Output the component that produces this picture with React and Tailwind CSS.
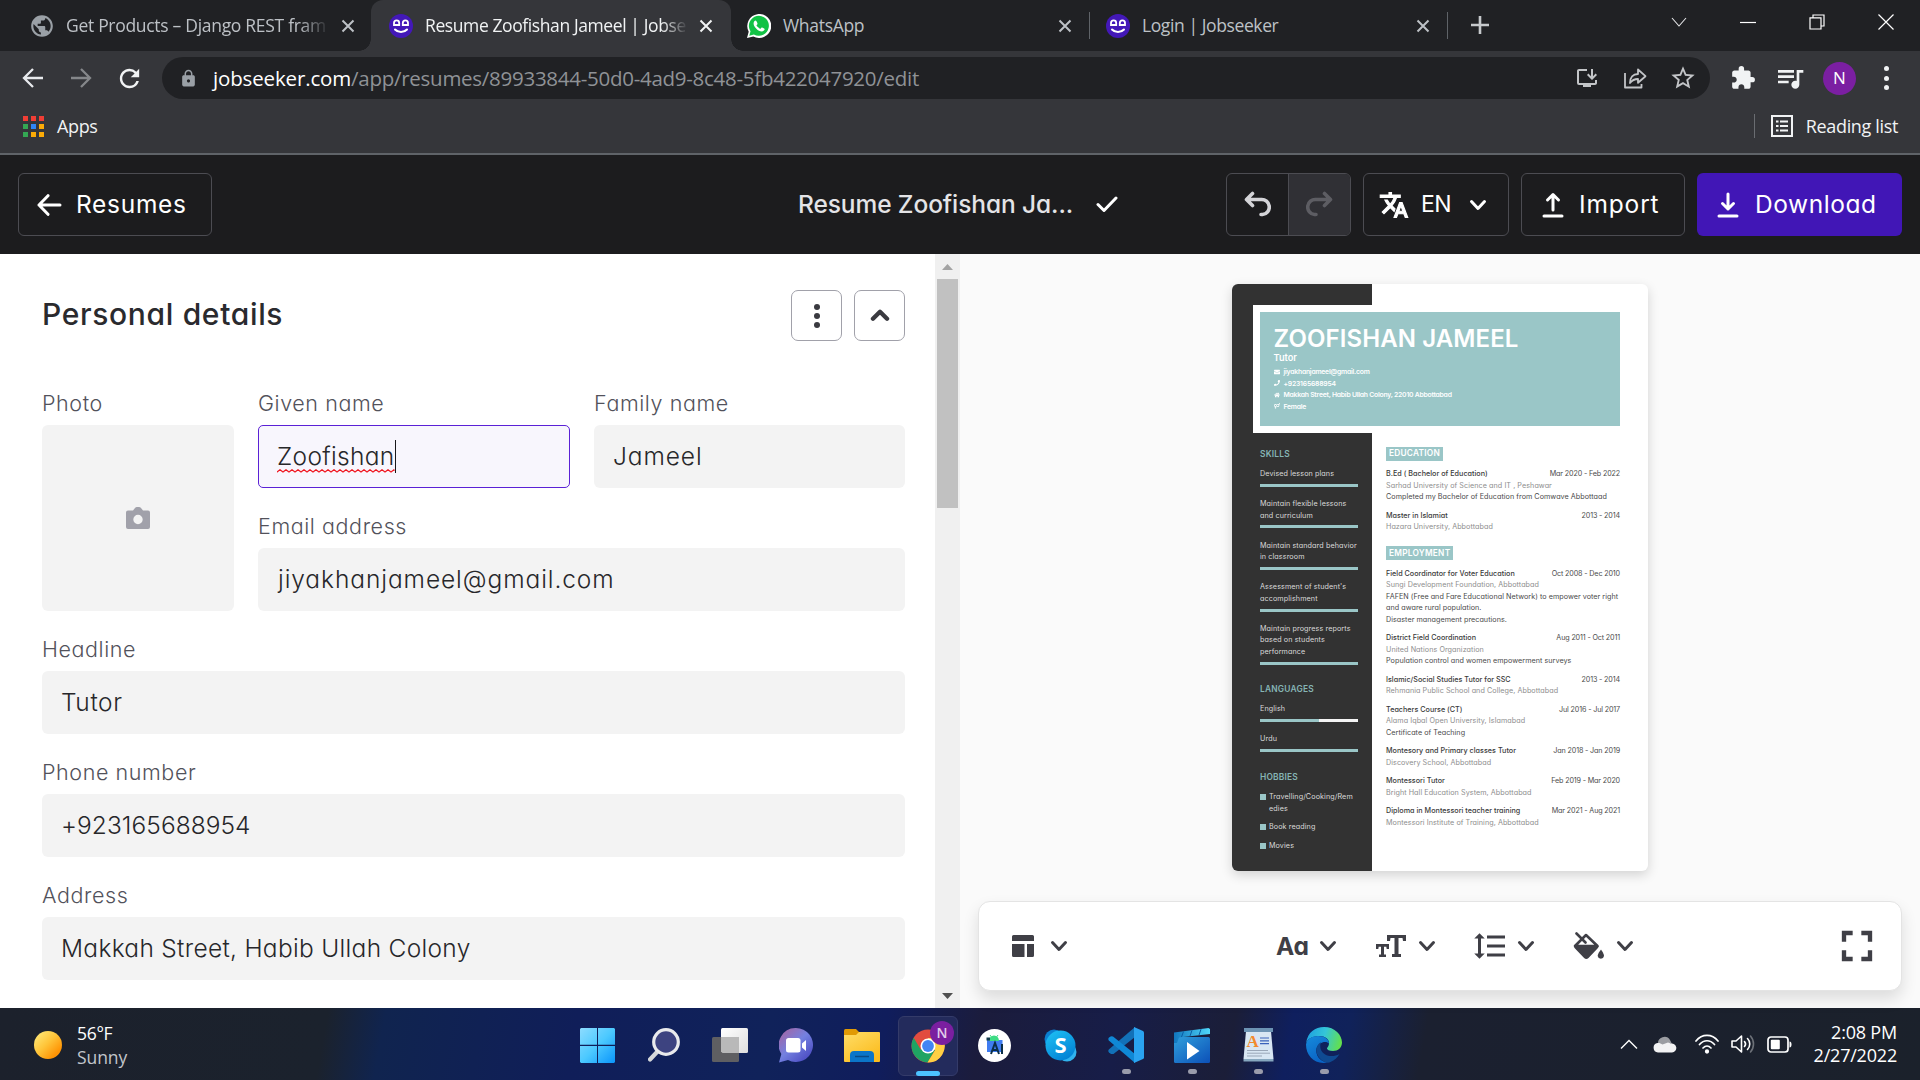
import React from "react";
import {
  MdPublic, MdLock, MdInstallDesktop, MdStarBorder, MdExtension, MdQueueMusic,
  MdFormatLineSpacing, MdFullscreen, MdRefresh,
} from "react-icons/md";
import { FaEnvelope, FaPhone, FaHome, FaVenusMars } from "react-icons/fa";

/* ---------- small shared drawings ---------- */

const Chevron = ({ className = "", up = false, sw = 3 }) => (
  <svg className={className} width="18" height="12" viewBox="0 0 18 12" fill="none" stroke="currentColor" strokeWidth={sw} strokeLinecap="round" strokeLinejoin="round">
    <path d={up ? "M2.5 9 9 2.5 15.5 9" : "M2.5 2.5 9 9.5 15.5 2.5"} />
  </svg>
);

const Cross = ({ className = "" }) => (
  <svg className={className} width="14" height="14" viewBox="0 0 14 14" stroke="currentColor" strokeWidth="2">
    <path d="M1.5 1.5 12.5 12.5M12.5 1.5 1.5 12.5" />
  </svg>
);

const Smiley = () => (
  <svg width="24" height="24" viewBox="0 0 24 24" fill="none" className="shrink-0">
    <circle cx="12" cy="12" r="12" fill="#4318b8" />
    <path d="M5 11V9a2.6 2.6 0 0 1 5.2 0v2zM13.800 11V9a2.600 2.600 0 0 1 5.200 0v2z" stroke="#fff" strokeWidth="1.8" />
    <path d="M6 15.500c3 3.300 9 3.300 12 0" stroke="#fff" strokeWidth="2" strokeLinecap="round" />
  </svg>
);

const WhatsApp = () => (
  <svg width="24" height="24" viewBox="0 0 24 24" className="shrink-0">
    <path d="M0 24 1.700 17.700A12 12 0 1 1 6.300 22.400z" fill="#fff" />
    <path d="M2.300 21.700 3.500 17.300A10 10 0 1 1 6.900 20.500z" fill="#12c245" />
    <path d="M8.500 6.500c-.6 0-1.900 1-1.900 2.900 0 3.600 4.800 8 8 8 1.800 0 3.100-1.200 3.100-2.300 0-.5-2.500-1.800-3-1.700-.5.200-1 1.400-1.400 1.400-.8 0-3.800-2.700-3.800-3.500 0-.4 1-.9 1-1.400 0-.6-.9-3.400-2-3.400z" fill="#fff" />
  </svg>
);

/* ---------- browser chrome ---------- */

function TabStrip() {
  return (
    <div className="flex h-[51px] bg-[#202124] text-[17.500px] tracking-[-0.3px] text-[#bdc1c6]">
      <div className="flex w-[371px] items-center pl-[29px] pr-[16px]">
        <MdPublic className="size-[26px] shrink-0 text-[#9aa0a6]" />
        <div className="ml-[11px] w-[264px] whitespace-nowrap [mask-image:linear-gradient(to_right,#000_88%,transparent)]">Get Products – Django REST fram</div>
        <Cross className="ml-[11px] shrink-0" />
      </div>
      <div className="relative flex w-[360px] items-center rounded-t-[12px] bg-[#35363a] pl-[18px] text-[#f1f3f4] before:absolute before:bottom-0 before:-left-[12px] before:size-[12px] before:bg-[radial-gradient(circle_at_0_0,transparent_11.5px,#35363a_12px)] after:absolute after:bottom-0 after:-right-[12px] after:size-[12px] after:bg-[radial-gradient(circle_at_100%_0,transparent_11.5px,#35363a_12px)]">
        <Smiley />
        <div className="ml-[12px] w-[263px] whitespace-nowrap tracking-[-0.4px] [mask-image:linear-gradient(to_right,#000_90%,transparent)]">Resume Zoofishan Jameel | Jobse</div>
        <Cross className="ml-[11px] shrink-0" />
      </div>
      <div className="flex w-[358px] items-center pl-[16px] pr-[17px]">
        <WhatsApp />
        <span className="ml-[12px] flex-1">WhatsApp</span>
        <Cross />
      </div>
      <div className="my-[12px] w-px bg-[#5f6368]" />
      <div className="flex w-[357px] items-center pl-[16px] pr-[17px]">
        <Smiley />
        <span className="ml-[12px] flex-1 tracking-[-0.4px]">Login | Jobseeker</span>
        <Cross />
      </div>
      <div className="my-[12px] w-px bg-[#5f6368]" />
      <svg className="mt-[16px] ml-[23px]" width="18" height="18" viewBox="0 0 18 18" stroke="#c6c9cc" strokeWidth="2.600"><path d="M9 0v18M0 9h18" /></svg>
      <div className="flex-1" />
      <div className="flex h-[43px] items-center text-white">
        <svg className="mr-[53px]" width="16" height="10" viewBox="0 0 16 10" fill="none" stroke="#e4e5e7" strokeWidth="1.100"><path d="M1 1l7 8 7-8" /></svg>
        <svg className="mr-[53px]" width="16" height="16" viewBox="0 0 16 16" stroke="currentColor" strokeWidth="1.200"><path d="M0 8.500h16" /></svg>
        <svg className="mr-[53px]" width="16" height="16" viewBox="0 0 16 16" fill="none" stroke="currentColor" strokeWidth="1.200"><path d="M1 3.800h11v11.200H1zM4 3.500V1h11v11h-2.500" /></svg>
        <svg className="mr-[26px]" width="16" height="16" viewBox="0 0 16 16" stroke="currentColor" strokeWidth="1.200"><path d="M.5.5l15 15M15.500.5l-15 15" /></svg>
      </div>
    </div>
  );
}

function AddressBar() {
  return (
    <div className="flex h-[54px] items-center bg-[#35363a] pl-[22px]">
      <svg width="22" height="20" viewBox="0 0 22 20" fill="none" stroke="#e8eaed" strokeWidth="2.300"><path d="M21 10H2.500M11 1 2 10l9 9" /></svg>
      <svg className="ml-[26px]" width="22" height="20" viewBox="0 0 22 20" fill="none" stroke="#85878a" strokeWidth="2.300"><path d="M1 10h18.500M11 1l9 9-9 9" /></svg>
      <MdRefresh className="ml-[23px] size-[29px] text-[#f1f3f4]" />
      <div className="ml-[18px] flex h-[42px] w-[1548px] items-center rounded-full bg-[#202124] pr-[13px] pl-[17px]">
        <MdLock className="size-[19px] text-[#9aa0a6]" />
        <div className="ml-[15px] flex-1 text-[20.500px] tracking-[-0.27px] text-[#8f9296]"><span className="tracking-[-0.15px] text-white">jobseeker.com</span>/app/resumes/89933844-50d0-4ad9-8c48-5fb422047920/edit</div>
        <MdInstallDesktop className="size-[24px] text-[#c3c5c8]" />
        <svg className="ml-[24px]" width="24" height="24" viewBox="0 0 24 24" fill="none" stroke="#c3c5c8" strokeWidth="1.800" strokeLinejoin="round">
          <path d="M2 7v14.500h16.500V18M7 17c0-6 3-9 8-9V3.500l7.500 6.700-7.500 6.600V13c-3.500 0-6 1.300-8 4z" />
        </svg>
        <MdStarBorder className="ml-[22px] size-[28px] text-[#c3c5c8]" />
      </div>
      <MdExtension className="ml-[20px] size-[26px] text-[#f1f3f4]" />
      <MdQueueMusic className="ml-[18px] size-[32px] text-[#f1f3f4]" />
      <div className="ml-[17px] flex size-[33px] items-center justify-center rounded-full bg-[#7b1fa2] text-[17px] text-white">N</div>
      <div className="ml-[28px] flex flex-col gap-[4.500px]">
        <i className="size-[5px] rounded-full bg-[#f1f3f4]" /><i className="size-[5px] rounded-full bg-[#f1f3f4]" /><i className="size-[5px] rounded-full bg-[#f1f3f4]" />
      </div>
    </div>
  );
}

function Bookmarks() {
  return (
    <div className="box-border flex h-[50px] items-center border-b-2 border-[#5f6368] bg-[#35363a] pr-[22px] pb-[6px] pl-[23px] text-[18px] tracking-[-0.35px] text-[#f1f3f4]">
      <div className="grid grid-cols-3 gap-[3px]">
        <i className="size-[5px] bg-[#f03e35]" /><i className="size-[5px] bg-[#f03e35]" /><i className="size-[5px] bg-[#f03e35]" />
        <i className="size-[5px] bg-[#34a853]" /><i className="size-[5px] bg-[#2f86f6]" /><i className="size-[5px] bg-[#fbab07]" />
        <i className="size-[5px] bg-[#34a853]" /><i className="size-[5px] bg-[#fbab07]" /><i className="size-[5px] bg-[#fbab07]" />
      </div>
      <span className="ml-[13px]">Apps</span>
      <div className="flex-1" />
      <div className="h-[24px] w-px bg-[#6a6d71]" />
      <svg className="ml-[16px]" width="22" height="22" viewBox="0 0 22 22" fill="none" stroke="#f1f3f4" strokeWidth="2"><path d="M1 1h20v20H1zM5 6.500h2.500M9 6.500h8M5 11h2.500M9 11h8M5 15.500h2.500M9 15.500h8" /></svg>
      <span className="ml-[13px]">Reading list</span>
    </div>
  );
}

/* ---------- application ---------- */

function AppHeader() {
  return (
    <div className="grid h-[99px] grid-cols-[798px_1fr_auto] items-center bg-[#1c1c1e] pr-[18px] pl-0 text-[24.500px] text-white">
      <div className="ml-[18px] flex h-[63px] w-[194px] items-center rounded-[6px] border border-[#4c4c52] pl-[18px]">
        <svg width="25" height="22" viewBox="0 0 25 22" fill="none" stroke="currentColor" strokeWidth="3" strokeLinecap="round" strokeLinejoin="round"><path d="M23 11H2M11 1.700 2 11l9 9.300" /></svg>
        <span className="ml-[14px] tracking-[0.700px]">Resumes</span>
      </div>
      <div className="flex items-center pb-px">
        <span className="w-[275px] whitespace-nowrap font-medium tracking-[-0.1px] text-[#e4e4e7]">Resume Zoofishan Ja...</span>
        <svg className="ml-[23px]" width="22" height="18" viewBox="0 0 22 18" fill="none" stroke="currentColor" strokeWidth="3" strokeLinecap="round" strokeLinejoin="round"><path d="M2 9.500l6 6L20 3" /></svg>
      </div>
      <div className="flex h-[63px] gap-[12px]">
        <div className="flex w-[125px] overflow-hidden rounded-[6px] border border-[#4c4c52]">
          <div className="flex w-[62px] items-center justify-center border-r border-[#4c4c52]">
            <svg width="27" height="27" viewBox="0 0 27 27" fill="none" stroke="#d4d4d8" strokeWidth="3.600" strokeLinecap="round" strokeLinejoin="round"><path d="M8.500 2.500 2.500 8.500l6 6M3 8.500h14a7.500 7.500 0 0 1 1.500 15H17" /></svg>
          </div>
          <div className="flex flex-1 items-center justify-center bg-[#303035]">
            <svg width="27" height="27" viewBox="0 0 27 27" fill="none" stroke="#5d5d63" strokeWidth="3.600" strokeLinecap="round" strokeLinejoin="round"><path d="M18.500 2.500l6 6-6 6M24 8.500H10a7.500 7.500 0 0 0-1.500 15H10" /></svg>
          </div>
        </div>
        <div className="flex w-[146px] items-center rounded-[6px] border border-[#4c4c52] pl-[15px]">
          <svg width="30" height="30" viewBox="0 0 24 24" fill="currentColor" stroke="currentColor" strokeWidth=".9">
            <path d="M12.870 15.070l-2.540-2.510.03-.03A17.520 17.520 0 0 0 14.070 6H17V4h-7V2H8v2H1v1.990h11.170C11.500 7.920 10.440 9.750 9 11.350 8.070 10.320 7.300 9.190 6.690 8h-2c.73 1.630 1.730 3.170 2.980 4.560l-5.090 5.020L4 19l5-5 3.110 3.110.76-2.040zM18.500 10h-2L12 22h2l1.120-3h4.750L21 22h2l-4.500-12zm-2.620 7 1.620-4.330L19.120 17h-3.240z" />
          </svg>
          <span className="ml-[12px] w-[31px] text-[23px] tracking-[-0.6px]">EN</span>
          <Chevron className="ml-[17px]" />
        </div>
        <div className="flex w-[164px] items-center rounded-[6px] border border-[#4c4c52] pl-[20px]">
          <svg width="22" height="26" viewBox="0 0 22 26" fill="none" stroke="currentColor" strokeWidth="3" strokeLinecap="round" strokeLinejoin="round"><path d="M11 18V3M5.500 8 11 2.500 16.500 8M2 24h18" /></svg>
          <span className="ml-[15px] tracking-[0.850px]">Import</span>
        </div>
        <div className="flex w-[205px] items-center rounded-[6px] bg-[#4116b6] pl-[20px]">
          <svg width="22" height="26" viewBox="0 0 22 26" fill="none" stroke="currentColor" strokeWidth="3" strokeLinecap="round" strokeLinejoin="round"><path d="M11 2v15M5.500 11.500 11 17l5.500-5.500M2 24h18" /></svg>
          <span className="ml-[16px] tracking-[0.550px]">Download</span>
        </div>
      </div>
    </div>
  );
}

const Label = ({ children }) => (
  <div className="flex h-[60px] items-end pb-[7px] text-[21.500px] leading-[30px] font-[350] tracking-[0.580px] whitespace-nowrap text-[#52525b]">{children}</div>
);

const Field = ({ label, value, className = "", textClass = "" }) => (
  <div className={className}>
    <Label>{label}</Label>
    <div className={`flex h-[63px] items-center rounded-[6px] bg-[#f3f3f3] text-[24.500px] font-[350] text-[#27272a] ${textClass}`}>{value}</div>
  </div>
);

function Form() {
  return (
    <div className="h-[754px] w-[935px] overflow-hidden bg-white pt-[36px] pr-[30px] pl-[42px]">
      <div className="flex h-[51px] items-center">
        <h1 className="flex-1 pb-[3px] text-[30px] font-medium tracking-[0.660px] text-[#2a2a2e]">Personal details</h1>
        <div className="flex size-[51px] flex-col items-center justify-center gap-[3px] rounded-[7px] border border-[#a1a1aa]">
          <i className="size-[6px] rounded-full bg-[#3a3a40]" /><i className="size-[6px] rounded-full bg-[#3a3a40]" /><i className="size-[6px] rounded-full bg-[#3a3a40]" />
        </div>
        <div className="ml-[12px] flex size-[51px] items-center justify-center rounded-[7px] border border-[#a1a1aa] text-[#3a3a40]">
          <Chevron up sw={4} className="h-[13px] w-[20px]" />
        </div>
      </div>
      <div className="mt-[24px] grid grid-cols-[192px_312px_311px] gap-x-[24px]">
        <div className="row-span-2">
          <Label>Photo</Label>
          <div className="flex h-[186px] items-center justify-center rounded-[6px] bg-[#f3f3f3]">
            <svg width="24" height="22" viewBox="0 0 24 22" fill="#a1a1aa" fillRule="evenodd"><path d="M2 3.500h5L9 1q.7-1 2-1h2q1.300 0 2 1l2 2.500h5q2 0 2 2V20q0 2-2 2H2q-2 0-2-2V5.500q0-2 2-2zM12 7.800a4.700 4.700 0 1 0 0 9.400 4.700 4.700 0 0 0 0-9.400z" /></svg>
          </div>
        </div>
        <div>
          <Label>Given name</Label>
          <div className="flex h-[63px] items-center rounded-[5px] border border-[#5b21d6] bg-[#f8f6fd] pl-[18px] text-[24.500px] font-[350] text-[#27272a]">
            <span className="relative tracking-[0.320px]">Zoofishan
              <svg className="absolute bottom-[2px] left-0 h-[4px] w-full" stroke="#f0141e" strokeWidth="1.300" fill="none">
                <defs><pattern id="sq" width="6" height="4" patternUnits="userSpaceOnUse"><path d="M-1 3.500 0 3l3-2.200L6 3l1 .5" /></pattern></defs>
                <rect width="100%" height="4" fill="url(#sq)" stroke="none" />
              </svg>
            </span>
            <i className="h-[33px] w-px bg-[#18181b]" />
          </div>
        </div>
        <Field label="Family name" value="Jameel" textClass="pl-[19px] tracking-[0.9px]" />
        <Field className="col-span-2" label="Email address" value="jiyakhanjameel@gmail.com" textClass="pl-[20px] tracking-[0.920px]" />
      </div>
      <Field label="Headline" value="Tutor" textClass="pl-[19px] tracking-[0.6px]" />
      <Field label="Phone number" value="+923165688954" textClass="pl-[19px] tracking-[0.05px]" />
      <Field label="Address" value="Makkah Street, Habib Ullah Colony" textClass="pl-[19px] tracking-[0.3px]" />
    </div>
  );
}

const Scrollbar = () => (
  <div className="flex w-[25px] flex-col items-center bg-[#f0f0f0]">
    <svg className="mt-[10px] h-[6px] w-[11px]" viewBox="0 0 11 6"><path d="M0 6 5.500 0 11 6z" fill="#a3a3a3" /></svg>
    <div className="mt-[9px] h-[229px] w-[21px] bg-[#c1c1c1]" />
    <div className="flex-1" />
    <svg className="mb-[9px] h-[6px] w-[11px]" viewBox="0 0 11 6"><path d="M0 0h11L5.500 6z" fill="#505050" /></svg>
  </div>
);

/* ---------- resume page ---------- */

const contacts = [
  [FaEnvelope, "jiyakhanjameel@gmail.com"],
  [FaPhone, "+923165688954"],
  [FaHome, "Makkah Street, Habib Ullah Colony, 22010 Abbottabad"],
  [FaVenusMars, "Female"],
];

const skills = [
  ["Devised lesson plans"],
  ["Maintain flexible lessons", "and curriculum"],
  ["Maintain standard behavior", "in classroom"],
  ["Assessment of student's", "accomplishment"],
  ["Maintain progress reports", "based on students", "performance"],
];

const education = [
  ["B.Ed ( Bachelor of Education)", "Mar 2020 - Feb 2022", "Sarhad University of Science and IT , Peshawar", ["Completed my Bachelor of Education from Comwave Abbottaad"]],
  ["Master in Islamiat", "2013 - 2014", "Hazara University, Abbottabad", []],
];

const employment = [
  ["Field Coordinator for Voter Education", "Oct 2008 - Dec 2010", "Sungi Development Foundation, Abbottabad", ["FAFEN (Free and Fare Educational Network) to empower voter right", "and aware rural population.", "Disaster management precautions."]],
  ["District Field Coordination", "Aug 2011 - Oct 2011", "United Nations Organization", ["Population control and women empowerment surveys"]],
  ["Islamic/Social Studies Tutor for SSC", "2013 - 2014", "Rehmania Public School and College, Abbottabad", []],
  ["Teachers Course (CT)", "Jul 2016 - Jul 2017", "Alama Iqbal Open University, Islamabad", ["Certificate of Teaching"]],
  ["Montesory and Primary classes Tutor", "Jan 2018 - Jan 2019", "Discovery School, Abbottabad", []],
  ["Montessori Tutor", "Feb 2019 - Mar 2020", "Bright Hall Education System, Abbottabad", []],
  ["Diploma in Montessori teacher training", "Mar 2021 - Aug 2021", "Montessori Institute of Training, Abbottabad", []],
];

const Bar = ({ part = false }) => (
  <div className="mt-[4.300px] mb-[11.200px] flex h-[3px] bg-[#f4f4f4]"><div className={part ? "w-[60%] bg-[#9ac6c7]" : "w-full bg-[#9ac6c7]"} /></div>
);

const SideHead = ({ children, className = "" }) => (
  <div className={`text-[8.400px] leading-[12px] font-semibold tracking-[0.2px] text-[#86b5b5] ${className}`}>{children}</div>
);

const Badge = ({ children, className = "" }) => (
  <div className={`flex h-[14px] w-max items-center bg-[#9ac6c7] px-[3px] text-[8.300px] font-semibold tracking-[0.250px] text-white ${className}`}>{children}</div>
);

const Entry = ({ entry: [title, date, place, notes] }) => (
  <div className="mb-[6.900px] whitespace-nowrap">
    <div className="flex justify-between font-medium text-[#3a3a3a]"><span>{title}</span><span className="font-normal tracking-[-0.150px] text-[#4c4c4c]">{date}</span></div>
    <div className="tracking-[0.06px] text-[#8e8e8e]">{place}</div>
    {notes.map((n) => <div key={n} className="tracking-[0.04px] text-[#4a4a4a]">{n}</div>)}
  </div>
);

function Resume() {
  return (
    <div className="relative mt-[30px] ml-[272px] flex h-[587px] w-[416px] overflow-hidden rounded-[6px] bg-white text-[7.200px] leading-[11.550px] tracking-[0.02px] shadow-[0_4px_12px_rgba(0,0,0,0.16)]">
      <div className="w-[140px] bg-[#323232] pt-[164px] pr-[14px] pl-[28px] tracking-[0.1px] text-[#dadada]">
        <SideHead>SKILLS</SideHead>
        <div className="mt-[8px] whitespace-nowrap">
          {skills.map((lines) => (
            <div key={lines[0]}>{lines.map((l) => <div key={l}>{l}</div>)}<Bar /></div>
          ))}
        </div>
        <SideHead className="mt-[18.500px]">LANGUAGES</SideHead>
        <div className="mt-[7.500px]">English<Bar part />Urdu<Bar /></div>
        <SideHead className="mt-[19.500px]">HOBBIES</SideHead>
        <div className="mt-[8px] flex flex-col gap-[7px]">
          {[["Travelling/Cooking/Rem", "edies"], ["Book reading"], ["Movies"]].map((h) => (
            <div key={h[0]} className="flex gap-[3px]"><i className="mt-[3px] size-[6px] bg-[#9ac6c7]" /><div>{h.map((l) => <div key={l}>{l}</div>)}</div></div>
          ))}
        </div>
      </div>
      <div className="w-[248px] pt-[163px] pl-[14px]">
        <Badge>EDUCATION</Badge>
        <div className="mt-[7px]">{education.map((e) => <Entry key={e[0]} entry={e} />)}</div>
        <Badge className="mt-[13.700px]">EMPLOYMENT</Badge>
        <div className="mt-[7.300px]">{employment.map((e) => <Entry key={e[0]} entry={e} />)}</div>
      </div>
      <div className="absolute top-[21px] left-[21px] h-[128px] w-[374px] border-[7px] border-white bg-[#9ac6c7] pt-[14px] pl-[13.500px] text-white">
        <div className="text-[24px] leading-[25px] font-[560] tracking-[0.100px]">ZOOFISHAN JAMEEL</div>
        <div className="mt-[1px] mb-[2px] text-[9.200px] leading-[12px] font-semibold">Tutor</div>
        {contacts.map(([Icon, text]) => (
          <div key={text} className="flex items-center gap-[4px] text-[6.800px] font-semibold tracking-[-0.220px]"><Icon className="size-[6px]" />{text}</div>
        ))}
      </div>
    </div>
  );
}

function StyleBar() {
  return (
    <div className="mt-[30px] ml-[18px] flex h-[90px] w-[924px] items-center rounded-[12px] border border-[#e4e4e4] bg-white pr-[19px] pl-[33px] text-[#3f3f46] shadow-[0_8px_16px_rgba(0,0,0,0.12)]">
      <svg width="22" height="22" viewBox="0 0 22 22" fill="currentColor"><path d="M0 1.500Q0 0 1.500 0h19Q22 0 22 1.500V6H0zM0 9h12.500v13h-11Q0 22 0 20.500zM15 9h7v11.500q0 1.500-1.500 1.500H15z" /></svg>
      <Chevron className="ml-[16px]" />
      <span className="ml-[208px] w-[33px] text-[24.500px] font-bold tracking-[-0.2px]">Aa</span>
      <Chevron className="ml-[10px]" />
      <svg className="ml-[39px]" width="30" height="22" viewBox="0 0 30 22" fill="currentColor"><path d="M11 0h19v6h-3l-.5-3H22.500v16H25v3h-9v-3h2.500V3h-4L14 6h-3zM0 9h13v5h-2.300l-.4-2.300H8V19.500h2V22H3v-2.500h2V11.700H2.700L2.300 14H0z" /></svg>
      <Chevron className="ml-[12px]" />
      <MdFormatLineSpacing className="ml-[36px] size-[36px]" />
      <Chevron className="ml-[9px]" />
      <svg className="ml-[38px]" width="31" height="28" viewBox="0 0 31 28" fill="none" stroke="currentColor" strokeWidth="2.600" strokeLinejoin="round" strokeLinecap="round">
        <path d="M2 14 13 3 24.500 14z" />
        <path d="M1 14h24.500q0 1.500-1 2.500l-9 9.500q-2.200 2-4.400 0L2 16.500q-1-1-1-2.500z" fill="currentColor" stroke="none" />
        <path d="M3.500 1.500 12.500 10.500" />
        <path d="M28 17.500s-3.300 4-3.300 6.500a3.200 3.200 0 0 0 6.300 0c0-2.500-3-6.500-3-6.500z" fill="currentColor" stroke="none" />
      </svg>
      <Chevron className="ml-[12px]" />
      <div className="flex-1" />
      <MdFullscreen className="-mr-[1px] size-[52px]" />
    </div>
  );
}

/* ---------- taskbar ---------- */

const Slot = ({ children, dot = false }) => (
  <div className="relative flex h-[72px] w-[66px] items-center justify-center pt-[2px]">
    {children}
    {dot && <i className="absolute bottom-[6px] h-[5px] w-[9px] rounded-full bg-[#9a9cab]" />}
  </div>
);

function Taskbar() {
  return (
    <div className="flex h-[72px] items-center bg-[linear-gradient(100deg,#1c212c_0%,#1b222d_17%,#10244f_20%,#101e59_30%,#10225a_40%,#101d5c_46%,#1b1c3c_51%,#171d48_58%,#1b1e38_64%,#0f1f5e_67%,#10225a_70%,#1b2030_74%,#1b212b_100%)] text-[18px] text-white">
      <div className="flex w-[565px] items-center pl-[34px]">
        <i className="mt-[2px] size-[28px] rounded-full bg-[linear-gradient(135deg,#ffe16b_15%,#ffc53a_45%,#ff9405_80%)]" />
        <div className="mt-[2px] ml-[15px] text-[17.500px] leading-[24px] tracking-[-0.3px]"><div>56°F</div><div className="tracking-[-0.1px] text-[#c3c6cb]">Sunny</div></div>
      </div>
      <Slot>
        <svg className="mr-[1px]" width="35" height="35" viewBox="0 0 35 35">
          <defs><linearGradient id="win" x1="0" y1="0" x2="35" y2="35" gradientUnits="userSpaceOnUse"><stop stopColor="#8ddcff" /><stop offset=".5" stopColor="#4cc9ff" /><stop offset="1" stopColor="#0a95fb" /></linearGradient></defs>
          <path d="M1 0h16v16.800H0V1zM18 0h16l1 1v15.800H18zM0 17.900h17V35H1l-1-1zM18 17.900h17V34l-1 1H18z" fill="url(#win)" />
        </svg>
      </Slot>
      <Slot>
        <svg width="32" height="34" viewBox="0 0 32 34"><path d="M9.500 23.500 2 31.500" stroke="#d5d7da" strokeWidth="4.200" strokeLinecap="round" /><circle cx="18" cy="14" r="12.300" fill="#3d4380" stroke="#e9eaec" strokeWidth="3.200" /></svg>
      </Slot>
      <Slot>
        <svg width="36" height="34" viewBox="0 0 36 34">
          <defs><linearGradient id="tv" x2="1" y2="1"><stop stopColor="#fff" /><stop offset="1" stopColor="#dedede" /></linearGradient></defs>
          <rect x="9" y="0" width="27" height="25" rx="1.500" fill="url(#tv)" /><rect x="0" y="9" width="27" height="25" rx="1.500" fill="#5f5f62" /><path d="M9 9h18v16H10.500L9 23.500z" fill="#b9b9b9" />
        </svg>
      </Slot>
      <Slot>
        <svg width="34" height="35" viewBox="0 0 34 35">
          <defs><linearGradient id="chat" x1="0" y1="0" x2=".9" y2="1"><stop offset=".1" stopColor="#a067a8" /><stop offset=".5" stopColor="#7481e0" /><stop offset=".9" stopColor="#4e4fc4" /></linearGradient></defs>
          <path d="M17 0a17 17 0 1 1-8 32L0 34.500 2.300 26A17 17 0 0 1 17 0z" fill="url(#chat)" /><rect x="7" y="10" width="14.500" height="14.500" rx="2.500" fill="#fff" /><path d="M23 15.500 27 12v11l-4-3.500z" fill="#fff" />
        </svg>
      </Slot>
      <Slot>
        <svg width="36" height="33" viewBox="0 0 36 33">
          <defs><linearGradient id="fo" x2=".7" y2="1"><stop stopColor="#ffdd68" /><stop offset="1" stopColor="#fbbc1e" /></linearGradient></defs>
          <path d="M0 1.500Q0 0 1.500 0H12l3 3v5H0z" fill="#e19a05" /><path d="M0 6h12l3-3h20q1 0 1 1v28q0 1-1 1H1q-1 0-1-1z" fill="url(#fo)" /><path d="M6 33v-7q0-4 4-4h16q4 0 4 4v7z" fill="#0b75c9" /><path d="M11 27.500h14" stroke="#0a4a86" strokeWidth="1.500" />
        </svg>
      </Slot>
      <Slot>
        <div className="relative mt-[1px] flex size-[60px] items-center justify-center rounded-[6px] border border-[#343b69] bg-[#232b5c]">
          <svg width="34" height="34" viewBox="0 0 34 34">
            <circle cx="17" cy="17" r="16.500" fill="#e24c3f" />
            <path d="M17 17 9.600 20.500 2.700 8.800A16.500 16.500 0 0 0 16.500 33.500L24 21z" fill="#1fa463" />
            <path d="M17 17 24.200 21 16.500 33.500A16.500 16.500 0 0 0 31.600 9H17z" fill="#ffd044" />
            <circle cx="17" cy="17" r="7.500" fill="#fff" /><circle cx="17" cy="17" r="5.900" fill="#4285f4" />
          </svg>
          <i className="absolute -bottom-px h-[5px] w-[24px] rounded-full bg-[#4cc2ff]" />
          <span className="absolute top-[4px] right-[3px] flex size-[24px] items-center justify-center rounded-full bg-[#7a1fa0] text-[14px] font-semibold text-[#e2cdeb]">N</span>
        </div>
      </Slot>
      <Slot>
        <svg width="33" height="33" viewBox="0 0 33 33"><circle cx="16.500" cy="16.500" r="16.500" fill="#fff" /><path d="M9 11h15.500v12H9z" fill="#3f7cf0" /><path d="M11 12a5 5.500 0 0 1 10 0z" fill="#3ddc84" /><path d="M12 6l1.500 2M20 6l-1.500 2" stroke="#3ddc84" /><path d="M8.500 8.500h3.500v3H8.500z" fill="#123a4c" /><path d="M13 25l4-11 4 11M15 21h4M24 15v10" stroke="#0c2f48" strokeWidth="2" fill="none" /></svg>
      </Slot>
      <Slot>
        <svg width="33" height="33" viewBox="0 0 33 33">
          <defs><linearGradient id="sk" x2=".6" y2="1"><stop stopColor="#1fc3f5" /><stop offset="1" stopColor="#0384d6" /></linearGradient></defs>
          <circle cx="10" cy="10" r="9.500" fill="#0b7fd0" /><circle cx="23" cy="23" r="9.500" fill="#31b3ee" /><circle cx="16.500" cy="16.500" r="15" fill="url(#sk)" />
          <text x="16.500" y="24" fill="#fff" fontSize="22" fontWeight="700" textAnchor="middle">S</text>
        </svg>
      </Slot>
      <Slot dot>
        <svg width="36" height="36" viewBox="0 0 36 36"><path d="M1 25.500l2 1.500h2.500L27 10V0L.8 22.500Q-.3 24 1 25.500z" fill="#1271b8" /><path d="M1 10.500 3 9.200 5 9.500 27 27v9L.8 13.500Q-.3 12 1 10.500z" fill="#0f88d6" /><path d="M26 0 35 4q1 .5 1 1.500v25q0 1-1 1.500l-9 4V0z" fill="#2aa3f0" /></svg>
      </Slot>
      <Slot dot>
        <svg width="36" height="35" viewBox="0 0 36 35">
          <defs><linearGradient id="mv" x2="1" y2="1"><stop stopColor="#2f9fdc" /><stop offset="1" stopColor="#0c50b8" /></linearGradient><linearGradient id="mt"><stop stopColor="#1176bd" /><stop offset="1" stopColor="#50d8fb" /></linearGradient></defs>
          <rect y="9" width="36" height="26" rx="1.500" fill="url(#mv)" /><path d="M0 4.500 34.500 0 36 1v5L5 9.500 3 15H0z" fill="url(#mt)" /><path d="M9.500 3.500 7.500 9M18 2.300 16 8M27 1.200 25 7" stroke="#0a5ca5" /><path d="M13 14v17.500L25.500 23z" fill="#fff" />
        </svg>
      </Slot>
      <Slot dot>
        <svg width="31" height="34" viewBox="0 0 31 34"><path d="M3 3h25l2.500 28H.5z" fill="#d8e6f3" /><path d="M1 0h29v4H1z" fill="#6c93b3" /><path d="M.5 31h30v2.500H.5z" fill="#86a7bf" /><text x="3.500" y="19" fontSize="17" fontWeight="700" fill="#f28a2e" className="font-['Liberation_Serif']">A</text><path d="M17 10h9M17 12.800h9M17 15.600h9" stroke="#3a62bb" strokeWidth="1.200" /><path d="M4 22.500h21M4 25.200h23M4 28h15" stroke="#9aa7b8" /></svg>
      </Slot>
      <Slot dot>
        <svg width="36" height="36" viewBox="0 0 36 36">
          <defs><linearGradient id="e1" x1="0" y1=".3" x2="1" y2=".5"><stop stopColor="#1d9fe0" /><stop offset=".5" stopColor="#34c5d8" /><stop offset="1" stopColor="#63e04d" /></linearGradient><linearGradient id="e2" x2=".5" y2="1"><stop stopColor="#168bdc" /><stop offset="1" stopColor="#0a63c4" /></linearGradient></defs>
          <path d="M0 16C2 5 9 0 18 0c11 0 18 8 18 15.500 0 5-4 8.500-9 8.500-4 0-6-1.500-6-2.500s2-2 2-5.500c0-4-4-7-9.500-7C7 9 2 11.500 0 16z" fill="url(#e1)" />
          <path d="M0 17.500C1 12 6 9 12 9c7 0 11 3.500 11 7.500-2-3-11-2-12.500 5C9 29 15 35 21.500 35.500 9 38 0 29 0 17.500z" fill="url(#e2)" />
          <path d="M15 15c-6 4-5.500 11-2 15.500 4 5 9 6 11.500 4.500 4-1.800 7-4.500 9-8-7 4-16 2-18.500-4-1-3-1-6 0-8z" fill="#0f4a92" />
        </svg>
      </Slot>
      <div className="flex-1" />
      <div className="flex items-center pr-[23px]">
        <svg width="18" height="11" viewBox="0 0 18 11" fill="none" stroke="#fff" strokeWidth="1.400"><path d="M1 9.500 9 1.500l8 8" /></svg>
        <svg className="ml-[15px]" width="24" height="17" viewBox="0 0 24 17"><path d="M5 8a6.500 6.500 0 0 1 12-4l2 4-9 5z" fill="#9b9da2" /><path d="M5 16.500A4.800 4.800 0 0 1 4.500 7c2-.2 3.500.5 5 1.500L15 6.500c1 .2 2 .5 2.500 1.200A4.500 4.500 0 1 1 19 16.500z" fill="#f3f3f4" /></svg>
        <svg className="ml-[18px]" width="24" height="20" viewBox="0 0 24 20" fill="none" stroke="#fff" strokeWidth="1.700" strokeLinecap="round"><path d="M1 7C7-.5 17-.5 23 7M4.500 10.500c4.500-5 10.500-5 15 0M8 14c2.500-2.700 5.500-2.700 8 0" /><circle cx="12" cy="17.500" r="1.300" fill="#fff" /></svg>
        <svg className="ml-[12px]" width="24" height="20" viewBox="0 0 24 20" fill="none" stroke="#fff" strokeWidth="1.600" strokeLinejoin="round" strokeLinecap="round"><path d="M1 7v6h4l5.500 5V2L5 7zM13.500 7.500c1.300 1.500 1.300 3.500 0 5M16.500 4.500c3 3 3 8 0 11" /><path d="M19.500 2c4 4.500 4 11.500 0 16" stroke="#6d7178" /></svg>
        <svg className="ml-[12px]" width="25" height="17" viewBox="0 0 25 17"><rect x="1" y="1" width="20" height="15" rx="3" fill="none" stroke="#fff" strokeWidth="1.700" /><rect x="3.800" y="3.800" width="9" height="9.400" rx="1" fill="#fff" /><path d="M22.500 5.500q2 0 2 3t-2 3z" fill="#fff" /></svg>
        <div className="ml-[22px] text-right text-[18px] leading-[23px] tracking-[-0.2px]"><div>2:08 PM</div><div>2/27/2022</div></div>
      </div>
    </div>
  );
}

export default function App() {
  return (
    <div className="h-[1080px] w-[1920px] overflow-hidden bg-[#fafafa] font-['Open_Sans','Noto_Sans',sans-serif]">
      <TabStrip />
      <AddressBar />
      <Bookmarks />
      <div className="font-['Inter',sans-serif] [font-feature-settings:'cv11']">
        <AppHeader />
        <div className="flex h-[754px]">
          <Form />
          <Scrollbar />
          <div className="w-[960px] bg-[#fafafa]">
            <Resume />
            <StyleBar />
          </div>
        </div>
      </div>
      <Taskbar />
    </div>
  );
}
